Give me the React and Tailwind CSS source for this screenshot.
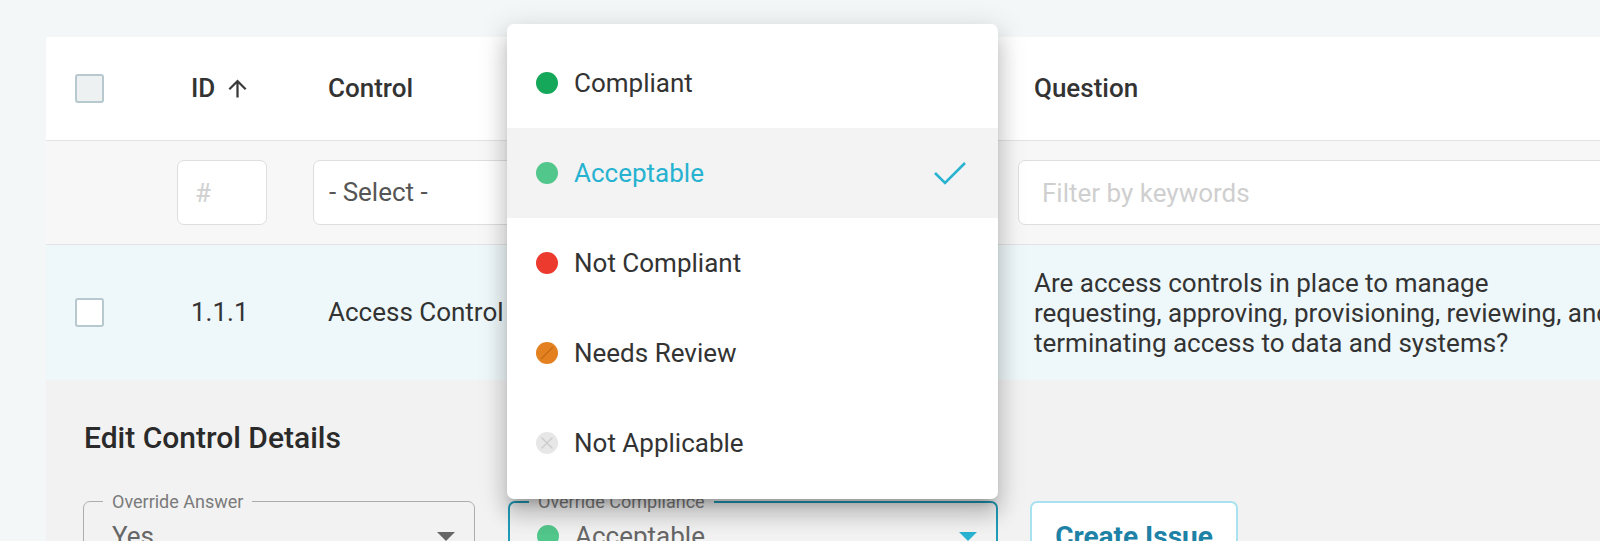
import React from 'react';

const options = [
  { label: 'Compliant', kind: 'compliant' },
  { label: 'Acceptable', kind: 'acceptable', selected: true },
  { label: 'Not Compliant', kind: 'notCompliant' },
  { label: 'Needs Review', kind: 'review' },
  { label: 'Not Applicable', kind: 'na' },
];

const dotColors = {
  compliant: 'bg-[#16a85a]',
  acceptable: 'bg-[#52c78b]',
  notCompliant: 'bg-[#ec3a2f]',
};

function StatusDot({ kind }) {
  if (kind === 'review') {
    return (
      <svg width="22" height="22" viewBox="0 0 22 22" className="shrink-0">
        <circle cx="11" cy="11" r="11" fill="#e3801f" />
        <path d="M5 17 L17 5" stroke="#c86b14" strokeWidth="1.4" />
      </svg>
    );
  }
  if (kind === 'na') {
    return (
      <svg width="22" height="22" viewBox="0 0 22 22" className="shrink-0">
        <circle cx="11" cy="11" r="11" fill="#e7e7e7" />
        <path d="M5.5 5.5 L16.5 16.5 M16.5 5.5 L5.5 16.5" stroke="#cdcdcd" strokeWidth="1.5" />
      </svg>
    );
  }
  return <span className={`block w-[22px] h-[22px] rounded-full shrink-0 ${dotColors[kind]}`} />;
}

function Caret({ color }) {
  return (
    <svg width="18" height="9" viewBox="0 0 18 9">
      <path d="M0 0 H18 L9 9 Z" fill={color} />
    </svg>
  );
}

function Checkbox({ filled }) {
  return (
    <span
      className={`block w-[29px] h-[29px] rounded-[3px] border-2 border-[#b7c9cf] ${
        filled ? 'bg-[#eef1f2]' : 'bg-white'
      }`}
    />
  );
}

function ComplianceMenu() {
  return (
    <div className="absolute left-[507px] top-[24px] w-[491px] bg-white rounded-[7px] pt-[14px] pb-[11px] z-10 shadow-[0_10px_10px_-6px_rgba(0,0,0,0.2),0_16px_20px_2px_rgba(0,0,0,0.14),0_6px_28px_4px_rgba(0,0,0,0.12)]">
      {options.map((o) => (
        <div
          key={o.label}
          className={`flex items-center h-[90px] pl-[29px] pr-[31px] ${o.selected ? 'bg-[#f3f3f3]' : ''}`}
        >
          <StatusDot kind={o.kind} />
          <span className={`ml-[16px] text-[26px] flex-1 ${o.selected ? 'text-[#27b2d0]' : 'text-[#333]'}`}>
            {o.label}
          </span>
          {o.selected && (
            <svg width="34" height="24" viewBox="0 0 34 24">
              <path d="M2 12 L12 22 L32 2" fill="none" stroke="#29b3d1" strokeWidth="2.6" />
            </svg>
          )}
        </div>
      ))}
    </div>
  );
}

export default function App() {
  return (
    <div className="relative w-[1600px] h-[541px] overflow-hidden bg-[#f3f7f8] font-['Roboto',sans-serif] pl-[46px] pt-[37px]">
      <div className="w-[1600px] bg-white">
        {/* Header */}
        <div className="flex items-center h-[104px] border-b border-[#e3e3e3] text-[26px] font-medium text-[#333]">
          <div className="w-[117px] shrink-0 pl-[29px]">
            <Checkbox filled />
          </div>
          <div className="w-[136px] shrink-0 pl-[28px] flex items-center gap-[9px]">
            <span>ID</span>
            <svg width="27" height="27" viewBox="0 0 24 24">
              <path d="M4 12l1.41 1.41L11 7.83V20h2V7.83l5.58 5.59L20 12l-8-8-8 8z" fill="#3a3a3a" />
            </svg>
          </div>
          <div className="w-[705px] shrink-0 pl-[29px]">Control</div>
          <div className="flex-1 pl-[30px]">Question</div>
        </div>

        {/* Filters */}
        <div className="flex items-center h-[104px] border-b border-[#e3e3e3] bg-[#f7f7f7] text-[26px]">
          <div className="w-[117px] shrink-0" />
          <div className="w-[136px] shrink-0 pl-[14px]">
            <input
              placeholder="#"
              className="w-[90px] h-[65px] rounded-[7px] border border-[#dedede] bg-white pl-[17px] text-[26px] placeholder:text-[#d0d0d0] outline-none"
            />
          </div>
          <div className="w-[705px] shrink-0 pl-[14px]">
            <div className="w-[420px] h-[65px] rounded-[7px] border border-[#dedede] bg-white pl-[15px] flex items-center text-[#555]">
              - Select -
            </div>
          </div>
          <div className="flex-1 min-w-0 pl-[14px]">
            <input
              placeholder="Filter by keywords"
              className="w-[700px] h-[65px] rounded-[7px] border border-[#dedede] bg-white pl-[23px] text-[26px] placeholder:text-[#cfcfcf] outline-none"
            />
          </div>
        </div>

        {/* Data row */}
        <div className="flex items-center h-[135px] bg-[#eef7f9] text-[26px] text-[#333]">
          <div className="w-[117px] shrink-0 pl-[29px]">
            <Checkbox />
          </div>
          <div className="w-[136px] shrink-0 pl-[28px]">1.1.1</div>
          <div className="w-[705px] shrink-0 pl-[29px]">Access Control</div>
          <div className="flex-1 min-w-0 pl-[30px] leading-[30px] whitespace-nowrap">
            Are access controls in place to manage
            <br />
            requesting, approving, provisioning, reviewing, and
            <br />
            terminating access to data and systems?
          </div>
        </div>

        {/* Edit panel */}
        <div className="bg-[#f2f2f2] h-[200px] pl-[37px] pt-[40px]">
          <h2 className="text-[30px] leading-[36px] font-medium text-[#2a2a2a] pl-[1px]">Edit Control Details</h2>
          <div className="flex items-start mt-[35px] gap-[33px]">
            <fieldset className="w-[392px] shrink-0 border border-[#adadad] rounded-[7px] px-[19px] pb-[8px]">
              <legend className="px-[9px] text-[18px] leading-[21px] text-[#7a7a7a]">Override Answer</legend>
              <div className="flex items-center justify-between h-[48px] pl-[9px]">
                <span className="text-[26px] text-[#666]">Yes</span>
                <Caret color="#666" />
              </div>
            </fieldset>
            <fieldset className="w-[490px] shrink-0 border-2 border-[#1f9ab8] rounded-[7px] px-[19px] pb-[8px]">
              <legend className="px-[9px] text-[18px] leading-[21px] text-[#7a7a7a]">Override Compliance</legend>
              <div className="flex items-center justify-between h-[48px] pl-[8px]">
                <span className="flex items-center gap-[16px]">
                  <StatusDot kind="acceptable" />
                  <span className="text-[26px] text-[#666]">Acceptable</span>
                </span>
                <Caret color="#29b3d1" />
              </div>
            </fieldset>
            <button className="w-[208px] shrink-0 h-[72px] mt-[10px] -ml-[1px] border-2 border-[#a6e2ef] rounded-[7px] bg-white text-[#1d82a6] font-bold text-[28px] flex items-center justify-center">
              Create Issue
            </button>
          </div>
        </div>
      </div>

      <ComplianceMenu />
    </div>
  );
}
